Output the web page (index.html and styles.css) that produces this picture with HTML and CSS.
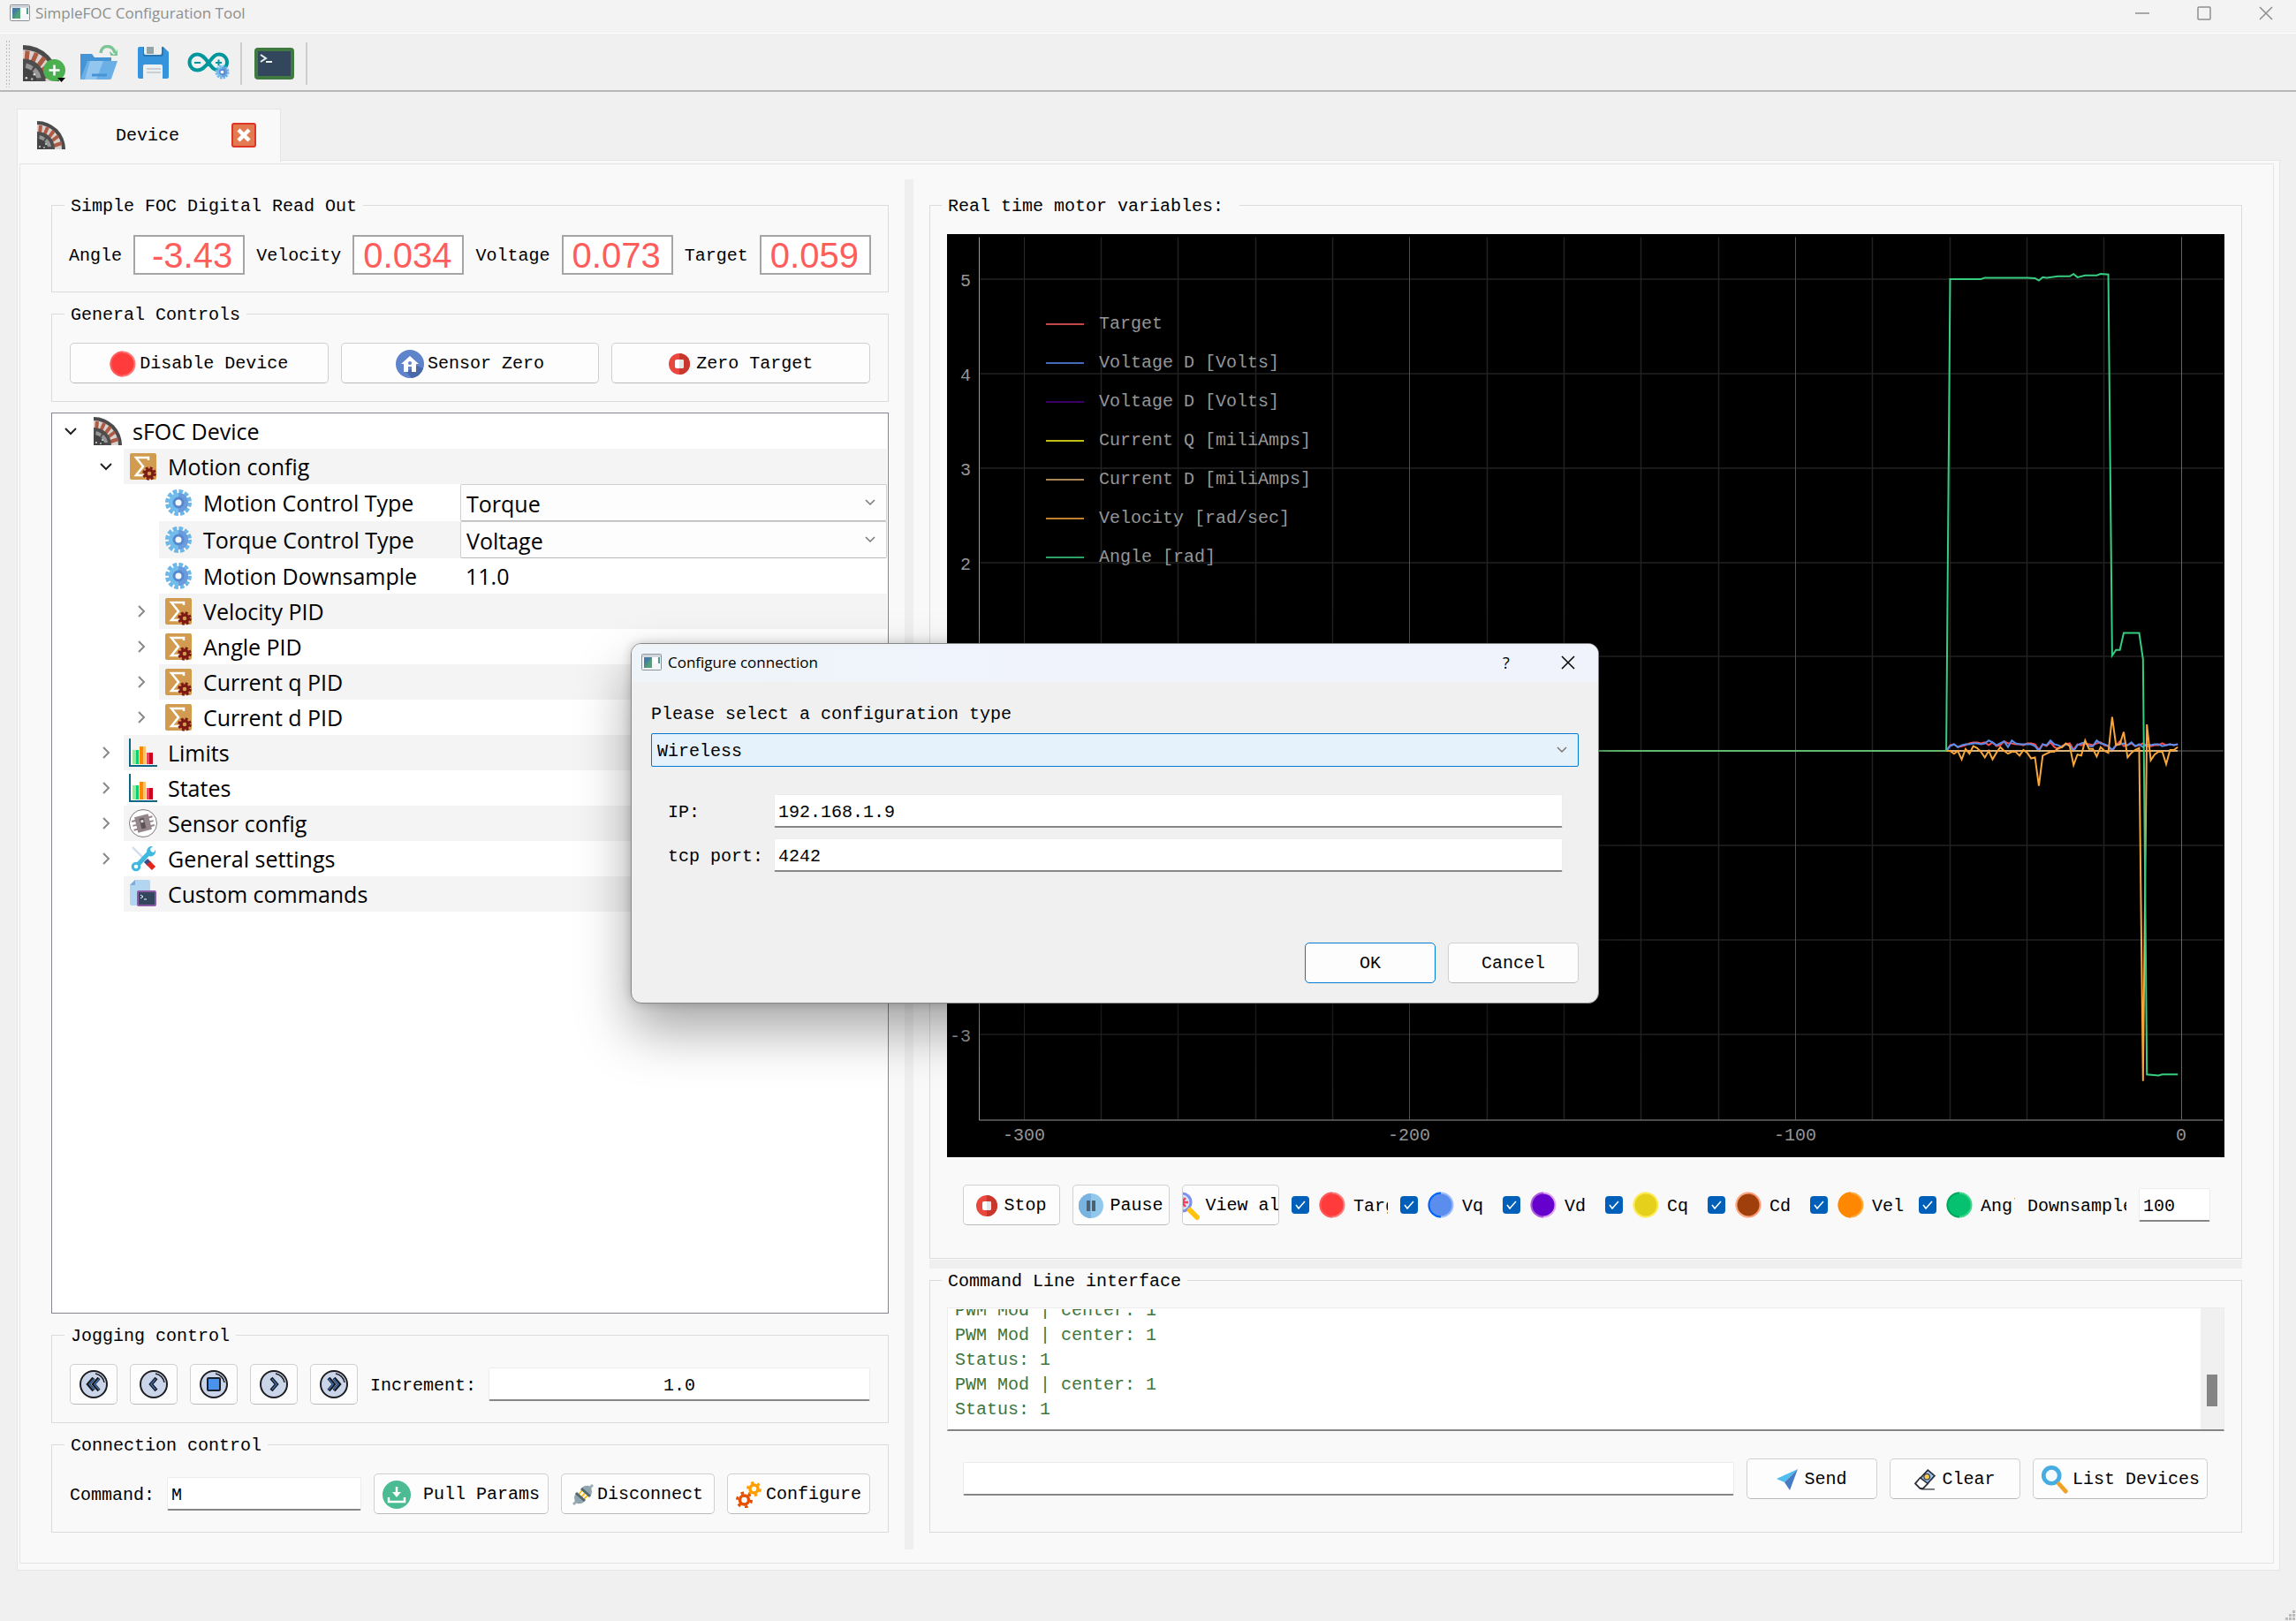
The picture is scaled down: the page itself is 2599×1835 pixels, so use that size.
FILE: index.html
```html
<!DOCTYPE html>
<html lang="en">
<head>
<meta charset="utf-8">
<title>SimpleFOC Configuration Tool</title>
<link rel="stylesheet" href="styles.css">
</head>
<body>
<svg class="defs" aria-hidden="true">
  <symbol id="app" viewBox="0 0 23 19"><rect x=".5" y=".5" width="22" height="18" rx="1" fill="#f4f6f7" stroke="#8b9198"/><path d="M1 2.500h21" stroke="#c5cad0" stroke-width="2"/><rect x="3" y="4" width="9" height="12" fill="#4b8f8c"/><path d="M3 4h9l-9 8z" fill="#467ba3"/><path d="M12 4v12H5z" fill="#57a56f" opacity=".7"/><rect x="14" y="4" width="4" height="7" fill="#fff"/><rect x="19" y="4" width="2" height="7" fill="#4e9c92"/></symbol>
  <symbol id="motor" viewBox="0 0 32 32"><path d="M0 0A32 32 0 0 1 32 32H0z" fill="#4b4b4b"/><path d="M0 4A28 28 0 0 1 28 32H18A18 18 0 0 0 0 14z" fill="#d9d2cf"/><g stroke="#ae5b45" stroke-width="4"><path d="M3 15L4 5M8 16l4-9M13 19l6-8M16 23l8-6M19 28l9-3"/></g><path d="M0 12A20 20 0 0 1 20 32H0z" fill="#4d4d4d"/><path d="M3 16a15 15 0 0 1 6 3l-2 4a9 9 0 0 0-5-2zM11 20a14 14 0 0 1 5 9h-4a9 9 0 0 0-4-5z" fill="#969696"/><path d="M0 20a12 12 0 0 1 12 12H0z" fill="#444"/><circle cx="10" cy="26" r="1" fill="#ddd"/><circle cx="3" cy="29" r="1" fill="#ddd"/><circle cx="8" cy="30" r="1" fill="#bbb"/></symbol>
  <symbol id="gear" viewBox="0 0 32 32"><circle cx="16" cy="16" r="12.500" fill="none" stroke="#6cb6e8" stroke-width="5" stroke-dasharray="4.500 2.045"/><circle cx="16" cy="16" r="11" fill="#71bdec"/><path d="M16 5a11 11 0 0 1 0 22z" fill="#6a9bdc"/><circle cx="16" cy="16" r="6.500" fill="#5788cf"/><circle cx="16" cy="16" r="3.500" fill="#f4f8fc"/></symbol>
  <symbol id="sigma" viewBox="0 0 32 32"><rect x="1" y="1" width="30" height="30" rx="2" fill="#d29c50"/><path d="M22 9V6H8l8 10-8 10h9" fill="none" stroke="#fff" stroke-width="2.500"/><circle cx="23" cy="24" r="6" fill="none" stroke="#7e1a16" stroke-width="3.500" stroke-dasharray="2.700 2.012"/><circle cx="23" cy="24" r="4" fill="none" stroke="#7e1a16" stroke-width="3.500"/></symbol>
  <symbol id="bars" viewBox="0 0 32 32"><path d="M1 0v31h31" fill="none" stroke="#0e6486" stroke-width="2"/><path d="M4 13h4v16H4z" fill="#9be69b"/><path d="M8 13h3v16H8z" fill="#07cf72"/><path d="M12 9h4v20h-4z" fill="#ff8a00"/><path d="M16 9h3v20h-3z" fill="#ffc06a"/><path d="M20 16h3v13h-3z" fill="#e8455b"/><path d="M23 16h4v13h-4z" fill="#d1001f"/></symbol>
  <symbol id="chip" viewBox="0 0 32 32"><circle cx="16" cy="16" r="15.500" fill="#fff" stroke="#85777b"/><g transform="rotate(-14 16 16)"><path d="M4 11h24M4 16h24M4 21h24" stroke="#95888c" stroke-width="2"/><rect x="8" y="7" width="16" height="18" fill="#95868a"/><rect x="13" y="10" width="5" height="12" fill="#5d5357"/><rect x="14" y="12" width="3" height="3" fill="#ddd"/></g></symbol>
  <symbol id="tools" viewBox="0 0 32 32"><path d="M4 3l15 15" stroke="#d6dff0" stroke-width="2.500"/><path d="M8 25L24 8" stroke="#3fb9df" stroke-width="5"/><circle cx="8" cy="25" r="3.800" fill="#fff" stroke="#3fb9df" stroke-width="3"/><path d="M20 8a6 6 0 0 1 7-6l-3 3 1 3 3 1 2-3a6 6 0 0 1-8 7z" fill="#3fb9df"/><path d="M19 18l4 4" stroke="#3c4a86" stroke-width="6"/><path d="M22 21l6 6" stroke="#e3261d" stroke-width="6"/></symbol>
  <symbol id="cmds" viewBox="0 0 32 32"><path d="M7 0h15a2 2 0 0 1 2 2v27H3a2 2 0 0 1-2-2V6z" fill="#b2d5f1"/><path d="M7 0v6H1z" fill="#80abdb"/><rect x="10" y="13" width="20" height="16" rx="1" fill="#33475c" stroke="#8e5aa5" stroke-width="2"/><path d="M13 17l3 2-3 2M17 22h3" stroke="#fff" fill="none"/></symbol>
  <symbol id="stop" viewBox="0 0 24 24"><circle cx="12" cy="12" r="12" fill="#e8483d"/><path d="M12 0a12 12 0 0 1 0 24z" fill="#c9372c"/><rect x="7" y="7" width="10" height="10" rx="2" fill="#fff"/><path d="M12 7h3a2 2 0 0 1 2 2v6a2 2 0 0 1-2 2h-3z" fill="#e1e6e9"/></symbol>
  <symbol id="home" viewBox="0 0 32 32"><circle cx="16" cy="16" r="16" fill="#5f84cc"/><path d="M24 18l7 3a16 16 0 0 1-13 11l-6-7z" fill="#4a69a9"/><path d="M16 7l10 9h-3v9h-5v-6h-4v6H9v-9H6z" fill="#fff"/><circle cx="16" cy="15" r="2" fill="#5f84cc"/></symbol>
  <symbol id="disc" viewBox="0 0 30 30"><circle cx="15" cy="15" r="14.500" fill="var(--rim)"/><path d="M15 .5a14.500 14.500 0 0 0 0 29z" fill="var(--rim2)"/><circle cx="15" cy="15" r="12.500" fill="var(--fill)"/></symbol>
  <symbol id="pause" viewBox="0 0 28 28"><circle cx="14" cy="14" r="14" fill="#92c8ec"/><path d="M14 0a14 14 0 0 0 0 28z" fill="#79b3e0"/><path d="M9 8h4v12H9zM15 8h4v12h-4z" fill="#4d6270"/></symbol>
  <symbol id="zoomall" viewBox="0 0 32 32"><circle cx="12" cy="12" r="10" fill="#cfe9f8" stroke="#7f8ff0" stroke-width="3"/><path d="M12 5v14M5 12h14M8 7l8 10M16 7L8 17" stroke="#f33f57" stroke-width="2.500"/><path d="M21 21l8 8" stroke="#ffc310" stroke-width="6" stroke-linecap="round"/></symbol>
  <symbol id="search" viewBox="0 0 32 34"><circle cx="12" cy="12" r="9.500" fill="#f4fbff" stroke="#46ade2" stroke-width="5"/><path d="M21 22l8 9" stroke="#f0a126" stroke-width="5" stroke-linecap="round"/></symbol>
  <symbol id="send" viewBox="0 0 24 24"><path d="M24 0L0 11l9 4z" fill="#50bdf0"/><path d="M24 0L9 15l6 9z" fill="#477bc4"/></symbol>
  <symbol id="erase" viewBox="0 0 22 22"><path d="M14 1l7 6L9 20H6l-5-5z" fill="#9ec2f4" stroke="#2c2f3a" stroke-width="1.500"/><path d="M6 9l8 6-5 5H6l-5-5z" fill="#fff" stroke="#2c2f3a" stroke-width="1.500"/><ellipse cx="13" cy="8" rx="3" ry="3" fill="#f7cb4c" stroke="#2c2f3a"/><path d="M7 21h14" stroke="#2c2f3a"/></symbol>
  <symbol id="pull" viewBox="0 0 32 32"><circle cx="16" cy="16" r="16" fill="#4abb93"/><path d="M16 7v7M7 19v5h18v-5" fill="none" stroke="#fff" stroke-width="2.500"/><path d="M11 13h10l-5 6z" fill="#fff"/></symbol>
  <symbol id="plug" viewBox="0 0 24 24"><path d="M1 23l4-4M19 5l4-4" stroke="#9aacb5" stroke-width="3"/><path d="M10 15l5-6M7 12l4-5M13 17l5-5" stroke="#fbc01e" stroke-width="2"/><path d="M4 10l10 9c-3 4-8 4-10 2s-3-7 0-11z" fill="#90a4ae"/><path d="M4 10l10 9" stroke="#506672" stroke-width="3"/><path d="M20 14L10 5c3-4 8-4 10-2s3 7 0 11z" fill="#90a4ae"/><path d="M20 14L10 5" stroke="#506672" stroke-width="3"/></symbol>
  <symbol id="cogs" viewBox="0 0 30 30"><g fill="none"><circle cx="20.500" cy="8.500" r="4.500" stroke="#ffa000" stroke-width="3.500"/><circle cx="20.500" cy="8.500" r="7" stroke="#ffa000" stroke-width="3" stroke-dasharray="3.200 4.130"/><circle cx="9.500" cy="21" r="5" stroke="#e65100" stroke-width="3.500"/><circle cx="9.500" cy="21" r="8" stroke="#e65100" stroke-width="3" stroke-dasharray="3.600 4.778"/></g></symbol>
  <symbol id="jogdisc" viewBox="0 0 32 32"><circle cx="16" cy="16" r="15" fill="#cbd5ea" stroke="#1d1d22" stroke-width="2"/><path d="M18 4a12 12 0 0 1 10 10" fill="none" stroke="#1d1d22" stroke-width="1.500"/></symbol>
  <symbol id="left2" viewBox="0 0 32 32"><use href="#jogdisc"/><path d="M16 9l-6 7 6 7M22 9l-6 7 6 7" fill="none" stroke="#14181f" stroke-width="4"/><path d="M16 10l-5 6 5 6M22 10l-5 6 5 6" fill="none" stroke="#3d69a8" stroke-width="1.500"/></symbol>
  <symbol id="left1" viewBox="0 0 32 32"><use href="#jogdisc"/><path d="M19 9l-6 7 6 7" fill="none" stroke="#14181f" stroke-width="4"/><path d="M18 10l-5 6 5 6" fill="none" stroke="#3d69a8" stroke-width="1.500"/></symbol>
  <symbol id="halt" viewBox="0 0 32 32"><use href="#jogdisc"/><rect x="9" y="9" width="14" height="14" rx="1" fill="#4a93ec" stroke="#17202c" stroke-width="2"/></symbol>
  <symbol id="right1" viewBox="0 0 32 32"><use href="#jogdisc"/><path d="M13 9l6 7-6 7" fill="none" stroke="#14181f" stroke-width="4"/><path d="M14 10l5 6-5 6" fill="none" stroke="#3d69a8" stroke-width="1.500"/></symbol>
  <symbol id="right2" viewBox="0 0 32 32"><use href="#jogdisc"/><path d="M10 9l6 7-6 7M16 9l6 7-6 7" fill="none" stroke="#14181f" stroke-width="4"/><path d="M10 10l5 6-5 6M16 10l5 6-5 6" fill="none" stroke="#3d69a8" stroke-width="1.500"/></symbol>
  <symbol id="down" viewBox="0 0 14 14"><path d="M1 4l6 6 6-6" fill="none" stroke="#222" stroke-width="2"/></symbol>
  <symbol id="next" viewBox="0 0 14 14"><path d="M4 1l6 6-6 6" fill="none" stroke="#888" stroke-width="2"/></symbol>
  <symbol id="close" viewBox="0 0 16 16"><path d="M1 1l14 14M15 1L1 15" fill="none" stroke="currentColor" stroke-width="1.500"/></symbol>
</svg>

<header class="titlebar">
  <svg class="app-icon"><use href="#app"/></svg>
  <h1>SimpleFOC Configuration Tool</h1>
  <div class="window-buttons">
    <button aria-label="Minimize"><svg viewBox="0 0 16 16"><path d="M0 8h16" stroke="currentColor" stroke-width="1.500"/></svg></button>
    <button aria-label="Maximize"><svg viewBox="0 0 16 16"><rect x="1" y="1" width="14" height="14" rx="1" fill="none" stroke="currentColor" stroke-width="1.500"/></svg></button>
    <button aria-label="Close"><svg><use href="#close"/></svg></button>
  </div>
</header>

<nav class="toolbar">
  <span class="handle"></span>
  <button aria-label="Add device"><svg viewBox="0 0 48 42"><use href="#motor" width="41" height="41"/><circle cx="35.500" cy="28.500" r="12.500" fill="#4caf50"/><path d="M29.500 28.500h12M35.500 22.500v12" stroke="#fff" stroke-width="2.500"/><path d="M39 37h9l-4.500 5z"/></svg></button>
  <button aria-label="Open"><svg viewBox="0 0 48 42"><path d="M3 10h13l3 4h19v8L13 39H3z" fill="#4594d6"/><path d="M11 18h34l-7 20a2 2 0 0 1-2 1H3z" fill="#6aafe5"/><path d="M14 18h15l-8 21H8z" fill="#93c6ef"/><path d="M16 34h17" stroke="#4594d6" stroke-width="3"/><path d="M26 9c1-10 14-10 16 0" fill="none" stroke="#7cc596" stroke-width="3.500"/><path d="M36 7l5 4 4-6v7h-8z" fill="#7cc596"/></svg></button>
  <button aria-label="Save"><svg viewBox="-2 0 48 42"><path d="M6 2h27l6 6v28a2 2 0 0 1-2 2H6a2 2 0 0 1-2-2V4a2 2 0 0 1 2-2z" fill="#3594dc"/><path d="M10 2h23v9a2 2 0 0 1-2 2H12a2 2 0 0 1-2-2z" fill="#2777b5"/><path d="M11 2h20v7a2 2 0 0 1-2 2H13a2 2 0 0 1-2-2z" fill="#ecf0f1"/><path d="M14 2h8v8h-8z" fill="#95a5a5"/><path d="M12 22h18a2 2 0 0 1 2 2v14H10V24a2 2 0 0 1 2-2z" fill="#ecf0f1"/><path d="M14 27h16M14 31h16" stroke="#bdc3c7" stroke-width="1.500"/></svg></button>
  <button aria-label="Generate code"><svg viewBox="-1 0 48 42"><path d="M23 20C18 13 15 10.500 10.500 10.500a9 9 0 0 0 0 18C15 28.500 18 26 23 20s7-9.500 12-9.500a9 9 0 0 1 0 18C30 28.500 28 27 23 20z" fill="none" stroke="#00979c" stroke-width="4"/><path d="M7 20h7M31 20h7M34.500 16.500v7" stroke="#00979c" stroke-width="2"/><use href="#gear" x="30" y="22" width="17" height="17"/></svg></button>
  <span class="bar"></span>
  <button aria-label="Console"><svg viewBox="0 0 48 42"><rect x="2" y="3" width="45" height="36" rx="4" fill="#407a41"/><rect x="6" y="7" width="37" height="28" fill="#33475c"/><path d="M9 11l6 4-6 4M15 19h7" fill="none" stroke="#ecf0f1" stroke-width="2"/></svg></button>
  <span class="bar"></span>
</nav>

<main>
  <div class="tab">
    <svg class="i32"><use href="#motor"/></svg>
    <span>Device</span>
    <button class="tab-close" aria-label="Close tab"><svg viewBox="0 0 28 28"><rect x="1" y="1" width="26" height="26" rx="2" fill="#e27b51" stroke="#df3526" stroke-width="2"/><path d="M8 8l12 12M20 8L8 20" stroke="#fff" stroke-width="4.500"/></svg></button>
  </div>
  <div class="pane"><div class="device">

    <div class="left">
      <fieldset>
        <legend>Simple FOC Digital Read Out</legend>
        <div class="readout">
          <label for="o1">Angle</label><output id="o1">-3.43</output>
          <label for="o2">Velocity</label><output id="o2">0.034</output>
          <label for="o3">Voltage</label><output id="o3">0.073</output>
          <label for="o4">Target</label><output id="o4">0.059</output>
        </div>
      </fieldset>
      <fieldset>
        <legend>General Controls</legend>
        <div class="thirds">
          <button class="btn"><svg class="i30 red"><use href="#disc"/></svg>Disable Device</button>
          <button class="btn"><svg class="i32"><use href="#home"/></svg>Sensor Zero</button>
          <button class="btn wide"><svg class="i24"><use href="#stop"/></svg>Zero Target</button>
        </div>
      </fieldset>

      <ul class="tree">
        <li class="l0"><svg class="arrow"><use href="#down"/></svg><div class="item"><svg class="i32"><use href="#motor"/></svg>sFOC Device</div></li>
        <li class="l1 alt"><svg class="arrow"><use href="#down"/></svg><div class="item"><svg class="i32"><use href="#sigma"/></svg>Motion config</div></li>
        <li class="l2 combo"><span class="arrow"></span><div class="item"><svg class="i32"><use href="#gear"/></svg><label for="mct">Motion Control Type</label><select id="mct"><option>Torque</option></select></div></li>
        <li class="l2 combo alt"><span class="arrow"></span><div class="item"><svg class="i32"><use href="#gear"/></svg><label for="tct">Torque Control Type</label><select id="tct"><option>Voltage</option></select></div></li>
        <li class="l2"><span class="arrow"></span><div class="item"><svg class="i32"><use href="#gear"/></svg><span class="name">Motion Downsample</span><span class="value">11.0</span></div></li>
        <li class="l2 alt"><svg class="arrow"><use href="#next"/></svg><div class="item"><svg class="i32"><use href="#sigma"/></svg>Velocity PID</div></li>
        <li class="l2"><svg class="arrow"><use href="#next"/></svg><div class="item"><svg class="i32"><use href="#sigma"/></svg>Angle PID</div></li>
        <li class="l2 alt"><svg class="arrow"><use href="#next"/></svg><div class="item"><svg class="i32"><use href="#sigma"/></svg>Current q PID</div></li>
        <li class="l2"><svg class="arrow"><use href="#next"/></svg><div class="item"><svg class="i32"><use href="#sigma"/></svg>Current d PID</div></li>
        <li class="l1 alt"><svg class="arrow"><use href="#next"/></svg><div class="item"><svg class="i32"><use href="#bars"/></svg>Limits</div></li>
        <li class="l1"><svg class="arrow"><use href="#next"/></svg><div class="item"><svg class="i32"><use href="#bars"/></svg>States</div></li>
        <li class="l1 alt"><svg class="arrow"><use href="#next"/></svg><div class="item"><svg class="i32"><use href="#chip"/></svg>Sensor config</div></li>
        <li class="l1"><svg class="arrow"><use href="#next"/></svg><div class="item"><svg class="i32"><use href="#tools"/></svg>General settings</div></li>
        <li class="l1 alt"><span class="arrow"></span><div class="item"><svg class="i32"><use href="#cmds"/></svg>Custom commands</div></li>
      </ul>

      <fieldset>
        <legend>Jogging control</legend>
        <div class="row">
          <button class="btn jog" aria-label="Fast back"><svg class="i32"><use href="#left2"/></svg></button>
          <button class="btn jog" aria-label="Back"><svg class="i32"><use href="#left1"/></svg></button>
          <button class="btn jog" aria-label="Halt"><svg class="i32"><use href="#halt"/></svg></button>
          <button class="btn jog" aria-label="Forward"><svg class="i32"><use href="#right1"/></svg></button>
          <button class="btn jog" aria-label="Fast forward"><svg class="i32"><use href="#right2"/></svg></button>
          <label for="inc">Increment:</label>
          <input id="inc" class="field grow center" value="1.0">
        </div>
      </fieldset>
      <fieldset>
        <legend>Connection control</legend>
        <div class="row">
          <label for="cmd">Command:</label>
          <input id="cmd" class="field grow" value="M">
          <button class="btn pull"><svg class="i32"><use href="#pull"/></svg>Pull Params</button>
          <button class="btn disconnect"><svg class="i24"><use href="#plug"/></svg>Disconnect</button>
          <button class="btn configure"><svg class="i30"><use href="#cogs"/></svg>Configure</button>
        </div>
      </fieldset>
    </div>

    <div class="splitter"></div>

    <div class="right">
      <fieldset class="motor">
        <legend>Real time motor variables:</legend>
        <div class="plot">
          <svg viewBox="0 0 1446 1044">
            <g stroke="#222" stroke-width="1.500">
              <path d="M174.500 3v999M261.500 3v999M349.500 3v999M436.500 3v999M611.500 3v999M698.500 3v999M785.500 3v999M873.500 3v999M1047.500 3v999M1135.500 3v999M1222.500 3v999M1309.500 3v999"/>
              <path d="M37 50.500h1408M37 157.500h1408M37 264.500h1408M37 371.500h1408M37 477.500h1408M37 691.500h1408M37 798.500h1408M37 905.500h1408"/>
            </g>
            <path d="M87.500 3v999" stroke="#2c2c2c"/>
            <path d="M523.500 3v999M960.500 3v999" stroke="#505050"/>
            <path d="M1397.500 3v999M37 584.500h1408" stroke="#666"/>
            <path d="M36.500 3v999.500h1408" fill="none" stroke="#969696"/>
            <g class="ticks">
              <text x="27" y="58">5</text><text x="27" y="165">4</text><text x="27" y="272">3</text><text x="27" y="379">2</text><text x="27" y="913">-3</text>
            </g>
            <g class="ticks mid">
              <text x="87" y="1025">-300</text><text x="523" y="1025">-200</text><text x="960" y="1025">-100</text><text x="1397" y="1025">0</text>
            </g>
            <g class="series" transform="translate(1397.500 584.500) scale(4.367 -106.800)">
              <polyline stroke="#ff4d4d" points="-61,0 -60,.06 -59,.07 -58,.04 -57,.05 -56,.06 -55,.08 -54,.09 -53,.09 -52,.08 -51,.09 -50,.06 -49,.09 -48,.05 -47,.06 -46,.1 -45,.08 -44,.08 -43,.07 -42,.07 -41,.06 -40,.08 -39,.08 -38,.07 -37,.01 -36,.07 -35,.05 -34,.09 -33,.04 -32,.02 -31,.05 -30,.07 -29,.08 -28,.01 -27,.07 -26,.06 -25,.08 -24,.07 -23,.06 -22,.08 -21,.09 -20,.06 -19,.05 -18,0 -17,.06 -16,.1 -15,.05 -14,.06 -13,.08 -12,.05 -11,.06 -10,.08 -9,.05 -8,.05 -7,.06 -6,.06 -5,.08 -4,.06 -3,.07 -2,.06 -1,.07"/>
              <polyline stroke="#5b8def" points="-61,0 -60,.05 -59,.07 -58,.04 -57,.06 -56,.07 -55,.07 -54,.08 -53,.08 -52,.07 -51,.08 -50,.11 -49,.09 -48,.06 -47,.08 -46,.1 -45,.04 -44,.11 -43,.08 -42,.07 -41,.07 -40,.07 -39,.07 -38,.05 -37,0 -36,.07 -35,.06 -34,.11 -33,.07 -32,.06 -31,.04 -30,.07 -29,.06 -28,0 -27,.06 -26,.08 -25,.09 -24,.05 -23,.05 -22,.11 -21,.08 -20,.07 -19,.05 -18,.01 -17,.06 -16,.07 -15,.08 -14,.06 -13,.09 -12,.05 -11,.07 -10,.04 -9,.07 -8,.06 -7,.07 -6,.07 -5,.05 -4,.06 -3,.07 -2,.06 -1,.07"/>
              <polyline stroke="#d8b27a" points="-61,0 -1,0"/>
              <polyline stroke="#f7a63b" points="-61,0 -60,0 -59,-.03 -58,0 -57,-.09 -56,.02 -55,-.03 -54,.05 -53,.03 -52,-.01 -51,-.07 -50,0 -49,-.09 -48,-.02 -47,.04 -46,0 -45,-.03 -44,-.01 -43,-.01 -42,-.05 -41,.01 -40,-.02 -39,-.08 -38,-.07 -37,-.37 -36,-.05 -35,-.03 -34,-.01 -33,-.01 -32,.03 -31,.04 -30,.08 -29,.05 -28,-.15 -27,-.04 -26,-.05 -25,.11 -24,.02 -23,.02 -22,-.06 -21,.04 -20,0 -19,-.02 -18,.36 -17,.06 -16,.07 -15,.2 -14,-.07 -13,-.02 -12,.01 -11,.03 -10,-3.5 -9,.28 -8,-.1 -7,-.04 -6,-.01 -5,-.01 -4,-.14 -3,.01 -2,.01 -1,.04"/>
              <polyline stroke="#37cd80" points="-61,0 -60,5 -52,5 -51,5.015 -40,5.015 -38,5.01 -37,4.985 -36,5.02 -35,5.015 -32,5.03 -29,5.03 -28,5.055 -27,5.02 -25,5.04 -22,5.04 -21,5.055 -19,5.05 -18,1.01 -17,1.07 -16,1.07 -15,1.25 -11,1.25 -10,.97 -9,-3.43 -6,-3.44 -5,-3.43 -1,-3.43"/>
              <polyline stroke="#63b972" points="-300,0 -61,0"/>
            </g>
          </svg>
          <ul class="legend">
            <li><i class="c1"></i>Target</li>
            <li><i class="c2"></i>Voltage D [Volts]</li>
            <li><i class="c3"></i>Voltage D [Volts]</li>
            <li><i class="c4"></i>Current Q [miliAmps]</li>
            <li><i class="c5"></i>Current D [miliAmps]</li>
            <li><i class="c6"></i>Velocity [rad/sec]</li>
            <li><i class="c7"></i>Angle [rad]</li>
          </ul>
        </div>
        <div class="row controls">
          <button class="btn small"><svg class="i24"><use href="#stop"/></svg>Stop</button>
          <button class="btn small"><svg class="i28"><use href="#pause"/></svg>Pause</button>
          <button class="btn small"><svg class="i32"><use href="#zoomall"/></svg>View all</button>
          <label class="chk"><input type="checkbox" checked><svg class="i30 red"><use href="#disc"/></svg><span class="t38">Target</span></label>
          <label class="chk"><input type="checkbox" checked><svg class="i30 blue"><use href="#disc"/></svg><span>Vq</span></label>
          <label class="chk"><input type="checkbox" checked><svg class="i30 violet"><use href="#disc"/></svg><span>Vd</span></label>
          <label class="chk"><input type="checkbox" checked><svg class="i30 yellow"><use href="#disc"/></svg><span>Cq</span></label>
          <label class="chk"><input type="checkbox" checked><svg class="i30 brown"><use href="#disc"/></svg><span>Cd</span></label>
          <label class="chk"><input type="checkbox" checked><svg class="i30 orange"><use href="#disc"/></svg><span class="t38">Vel</span></label>
          <label class="chk"><input type="checkbox" checked><svg class="i30 green"><use href="#disc"/></svg><span class="t38">Angle</span></label>
          <label class="down" for="ds">Downsample</label>
          <input id="ds" class="field tiny" value="100">
        </div>
      </fieldset>

      <div class="splitter"></div>

      <fieldset class="cli">
        <legend>Command Line interface</legend>
        <div class="console">
          <pre>PWM Mod | center: 1
PWM Mod | center: 1
Status: 1
PWM Mod | center: 1
Status: 1</pre>
          <div class="scroll"><span></span></div>
        </div>
        <div class="row controls">
          <input class="field grow" aria-label="Command line">
          <button class="btn mid"><svg class="i24"><use href="#send"/></svg>Send</button>
          <button class="btn mid"><svg class="i24"><use href="#erase"/></svg>Clear</button>
          <button class="btn list"><svg class="i32"><use href="#search"/></svg>List Devices</button>
        </div>
      </fieldset>
    </div>
  </div></div>
</main>
<footer class="status"><svg viewBox="0 0 12 12"><path d="M8 0h3v3H8zM4 4h3v3H4zM8 4h3v3H8zM0 8h3v3H0zM4 8h3v3H4zM8 8h3v3H8z" fill="#bbb"/></svg></footer>

<section class="dialog" role="dialog" aria-labelledby="dt">
  <header>
    <svg class="app-icon"><use href="#app"/></svg>
    <h2 id="dt">Configure connection</h2>
    <button aria-label="Help">?</button>
    <button aria-label="Close"><svg><use href="#close"/></svg></button>
  </header>
  <div class="form">
    <label for="type">Please select a configuration type</label>
    <select id="type"><option>Wireless</option></select>
    <div class="pairs">
      <label for="ip">IP:</label><input id="ip" class="field" value="192.168.1.9">
      <label for="port">tcp port:</label><input id="port" class="field" value="4242">
    </div>
    <div class="actions">
      <button class="btn mid default">OK</button>
      <button class="btn mid">Cancel</button>
    </div>
  </div>
</section>
</body>
</html>
```
FILE: styles.css
```css
:root {
  --mono: "Liberation Mono", monospace;
  --ui: "Open Sans", "Noto Sans", sans-serif;
}
* { box-sizing: border-box; }
body {
  margin: 0;
  min-height: 100vh;
  display: flex;
  flex-direction: column;
  background: #f0f0f0;
  color: #000;
  font: 20px/24px var(--mono);
}
button, input, select { font: inherit; color: inherit; }
button { cursor: pointer; }
svg { display: block; flex: none; }
.defs { position: absolute; width: 0; height: 0; }
.i24 { width: 24px; height: 24px; }
.i28 { width: 28px; height: 28px; }
.i30 { width: 30px; height: 30px; }
.i32 { width: 32px; height: 32px; }
.app-icon { width: 23px; height: 19px; }

/* title bar and toolbar */
.titlebar {
  display: flex;
  align-items: center;
  gap: 6px;
  height: 38px;
  padding: 0 11px 8px;
  background: #f3f3f3;
  border-bottom: 1px solid #fff;
  color: #8e8e8e;
}
h1, h2 { margin: 0; font: 17px/24px var(--ui); }
.window-buttons { display: flex; gap: 54px; margin-left: auto; padding-right: 15px; }
.window-buttons button { width: 16px; height: 16px; padding: 0; border: 0; background: none; }
.window-buttons svg { width: 16px; height: 16px; }
.toolbar {
  display: flex;
  align-items: center;
  gap: 14px;
  height: 66px;
  padding: 3px 6px 0;
  border-bottom: 2px solid #b7b7b7;
}
.toolbar button { width: 48px; height: 42px; padding: 0; border: 0; background: none; }
.toolbar svg { width: 48px; height: 42px; }
.handle { width: 6px; height: 54px; background: radial-gradient(circle, #bbb 1px, transparent 1px) 0 0 / 3px 4px; }
.bar { width: 2px; height: 48px; background: #cdcdcd; margin: 0 -2px; }

/* tab and panes */
main { flex: 1; display: flex; flex-direction: column; padding: 19px 18px 0 19px; }
.tab {
  position: relative;
  display: flex;
  align-items: center;
  width: 299px;
  height: 60px;
  margin-bottom: -2px;
  padding: 0 27px 2px 22px;
  background: #f9f9f9;
  border: 1px solid #e5e5e5;
  border-bottom: 0;
}
.tab span { flex: 1; padding: 2px 0 0 57px; }
.tab-close { padding: 0; border: 0; background: none; }
.tab-close svg { width: 28px; height: 28px; }
.pane {
  flex: 1;
  display: flex;
  padding: 3px 6px 7px 2px;
  background: #f9f9f9;
  border: 1px solid #e5e5e5;
}
.device {
  flex: 1;
  display: grid;
  grid-template-columns: minmax(0, 948fr) 10px minmax(0, 1486fr);
  gap: 18px;
  padding: 17px 35px 15px;
  border: 1px solid #e5e5e5;
}
.splitter { background: #efefef; }
.left, .right { display: flex; flex-direction: column; padding: 17px 0 19px; }
.left { gap: 12px; }
.right .splitter { height: 10px; margin: 1px 0; }

fieldset { min-width: 0; margin: 0; padding: 21px 20px 20px; border: 1px solid #dcdcdc; }
legend { height: 24px; margin-left: -6px; padding: 0 7px; line-height: 28px; }
label { padding-top: 3px; }
.row { display: flex; align-items: center; gap: 14px; }
.btn {
  display: flex;
  align-items: center;
  justify-content: center;
  gap: 4px;
  height: 46px;
  padding: 2px 0 0;
  overflow: hidden;
  white-space: nowrap;
  background: #fdfdfd;
  border: 1px solid #d0d0d0;
  border-bottom-color: #b9b9b9;
  border-radius: 5px;
}
.field {
  min-width: 0;
  height: 38px;
  padding: 4px 4px 0;
  background: #fff;
  border: 1px solid #ececec;
  border-bottom: 2px solid #868686;
  border-radius: 2px;
}
.grow { flex: 1; }
.center { text-align: center; }

.readout { display: flex; align-items: center; justify-content: space-between; margin: 1px -1px -1px; }
output {
  width: 126px;
  height: 45px;
  padding-right: 12px;
  border: 2px solid #a5a5a5;
  background: #fff;
  color: #ff5c5c;
  font: 40px/42px "Liberation Sans", sans-serif;
  text-align: right;
}
.thirds { display: grid; grid-template-columns: repeat(3, 1fr); gap: 14px; }
.wide { gap: 7px; }
.jog { width: 54px; padding-top: 0; }
.pull { width: 198px; gap: 14px; }
.disconnect { width: 174px; }
.configure { width: 162px; }

/* parameter tree */
.tree {
  flex: 1;
  margin: 0;
  padding: 0 1px;
  list-style: none;
  background: #fff;
  border: 1px solid #828790;
  font: 25px/32px var(--ui);
}
.tree li { display: flex; height: 40px; }
.tree .combo { height: 42px; }
.l1 { padding-left: 40px; }
.l2 { padding-left: 80px; }
.arrow { flex: none; align-self: center; width: 40px; height: 14px; }
.item { flex: 1; display: flex; align-items: center; gap: 12px; padding-left: 6px; }
.alt .item { background: #f4f4f4; }
.item label, .name { flex: 0 0 279px; padding: 0; }
.item select { flex: 1; height: 42px; padding: 1px 6px 0; }
select {
  appearance: none;
  border: 1px solid #d0d0d0;
  border-bottom-color: #b9b9b9;
  border-radius: 2px;
  background: #fdfdfd url("data:image/svg+xml,%3Csvg xmlns='http://www.w3.org/2000/svg' width='12' height='12'%3E%3Cpath d='M1 3l5 5 5-5' fill='none' stroke='%23777' stroke-width='1.500'/%3E%3C/svg%3E") no-repeat right 12px center;
}
.value { padding-left: 6px; }

/* plot */
.motor { flex: 1; display: flex; flex-direction: column; }
.motor, .cli { padding: 21px 19px 37px; }
.cli { padding-top: 19px; }
.motor legend { padding-right: 18px; }
.plot { position: relative; flex: 1; min-height: 600px; background: #000; }
.plot svg { position: absolute; inset: 0; width: 100%; height: 100%; }
.ticks { fill: #969696; font: 20px var(--mono); text-anchor: end; }
.mid { text-anchor: middle; }
.series polyline { fill: none; stroke-width: 2px; vector-effect: non-scaling-stroke; }
.legend {
  position: absolute;
  left: 112px;
  top: 80px;
  margin: 0;
  padding: 0;
  list-style: none;
  color: #969696;
  line-height: 44px;
}
.legend li { display: flex; align-items: center; gap: 17px; }
.legend i { width: 43px; height: 2px; }
.c1 { background: #c04848; }
.c2 { background: #456bb8; }
.c3 { background: #3c0069; }
.c4 { background: #c0bd17; }
.c5 { background: #a88658; }
.c6 { background: #c08030; }
.c7 { background: #2ea266; }

.controls { margin-top: 31px; padding: 0 16px 0 18px; }
.cli .controls { padding-right: 19px; }
.small { width: 110px; gap: 7px; }
.chk { display: flex; align-items: center; padding: 0; }
.chk input {
  appearance: none;
  width: 20px;
  height: 20px;
  margin: 0 11px 0 0;
  border-radius: 4px;
  background: #005fb8 url("data:image/svg+xml,%3Csvg xmlns='http://www.w3.org/2000/svg' width='12' height='12'%3E%3Cpath d='M1 6l3 4 7-8' fill='none' stroke='white' stroke-width='1.500'/%3E%3C/svg%3E") no-repeat center;
}
.chk span { width: 32px; margin-left: 9px; padding-top: 3px; overflow: hidden; }
.chk .t38 { width: 39px; }
.red { --fill: #ff3b3b; --rim: #ff7d7d; --rim2: #ff5b5b; }
.blue { --fill: #5b8def; --rim: #9dbdf8; --rim2: #0063f7; }
.violet { --fill: #6600cc; --rim: #dda5e9; --rim2: #ac5dd9; }
.yellow { --fill: #e5d11c; --rim: #fdec5a; --rim2: #fdec5a; }
.brown { --fill: #a03e0c; --rim: #fc9c75; --rim2: #fdac8a; }
.orange { --fill: #ff8800; --rim: #fdac42; --rim2: #ff8800; }
.green { --fill: #06c270; --rim: #39d98a; --rim2: #05a660; }
.down { flex: 1; overflow: hidden; }
.tiny { width: 81px; }

.console {
  display: flex;
  height: 140px;
  background: #fff;
  border: 1px solid #ececec;
  border-bottom: 2px solid #868686;
}
.console pre {
  flex: 1;
  align-self: flex-end;
  height: 136px;
  margin: 0;
  padding: 0 8px 8px;
  display: flex;
  align-items: flex-end;
  overflow: hidden;
  color: #3c763d;
  font: 20px/28px var(--mono);
}
.scroll { width: 26px; padding: 75px 7px 0; background: #f0f0f0; }
.scroll span { display: block; height: 36px; width: 12px; background: #858585; }
.btn.mid { width: 148px; gap: 7px; }
.list { width: 198px; }

.status { height: 57px; display: flex; justify-content: flex-end; align-items: flex-end; }
.status svg { width: 12px; height: 12px; }

/* connection dialog, floating over the main window */
.dialog {
  position: absolute;
  left: 714px;
  top: 728px;
  width: 1096px;
  background: #f0f0f0;
  border: 1px solid #888;
  border-radius: 12px;
  overflow: hidden;
  box-shadow: 0 30px 60px rgba(0, 0, 0, .35), 0 0 12px rgba(0, 0, 0, .2);
}
.dialog header {
  display: flex;
  align-items: center;
  gap: 7px;
  height: 43px;
  padding: 0 26px 2px 11px;
  background: linear-gradient(90deg, #eef4f8, #f0f3fc 40%);
}
.dialog h2 { flex: 1; }
.dialog header button { width: 16px; padding: 0; border: 0; background: none; font: 18px/24px var(--ui); }
.dialog header button + button { margin-left: 47px; }
.dialog header svg:not(.app-icon) { width: 16px; height: 16px; }
.form { display: flex; flex-direction: column; padding: 22px 22px; }
.form select {
  height: 38px;
  margin-top: 9px;
  padding: 3px 6px 0;
  background-color: #e5f1fb;
  border: 1px solid #0078d4;
}
.pairs {
  display: grid;
  grid-template-columns: 110px 1fr;
  align-items: center;
  gap: 12px 10px;
  padding: 31px 18px 0 19px;
}
.actions { display: flex; justify-content: flex-end; gap: 14px; margin-top: 80px; }
.btn.default { border: 1px solid #0078d4; }
```
